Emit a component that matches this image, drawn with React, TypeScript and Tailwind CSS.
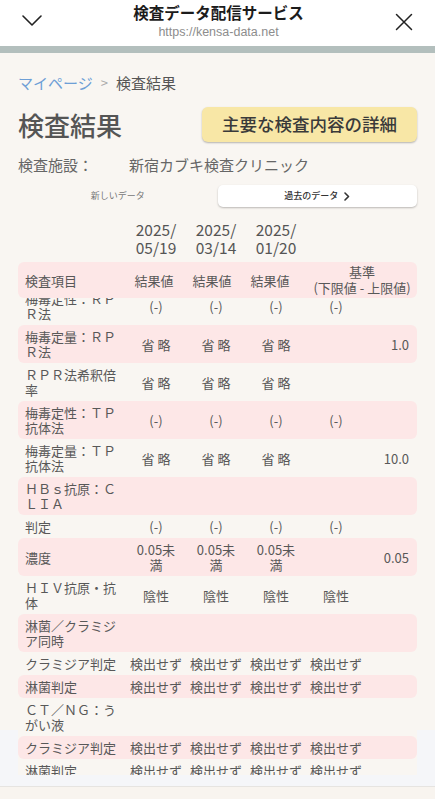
import React from "react";

type Row = { label: string; vals: string[]; ref?: string };

// Rows of the result table, top to bottom (the first is scrolled under the header).
const ROWS: Row[] = [
  { label: "梅毒定性：ＲＰＲ法", vals: ["(-)", "(-)", "(-)", "(-)"] },
  { label: "梅毒定量：ＲＰＲ法", vals: ["省 略", "省 略", "省 略", ""], ref: "1.0" },
  { label: "ＲＰＲ法希釈倍率", vals: ["省 略", "省 略", "省 略", ""] },
  { label: "梅毒定性：ＴＰ抗体法", vals: ["(-)", "(-)", "(-)", "(-)"] },
  { label: "梅毒定量：ＴＰ抗体法", vals: ["省 略", "省 略", "省 略", ""], ref: "10.0" },
  { label: "ＨＢｓ抗原：ＣＬＩＡ", vals: ["", "", "", ""] },
  { label: "判定", vals: ["(-)", "(-)", "(-)", "(-)"] },
  { label: "濃度", vals: ["0.05未\n満", "0.05未\n満", "0.05未\n満", ""], ref: "0.05" },
  { label: "ＨＩＶ抗原・抗体", vals: ["陰性", "陰性", "陰性", "陰性"] },
  { label: "淋菌／クラミジア同時", vals: ["", "", "", ""] },
  { label: "クラミジア判定", vals: ["検出せず", "検出せず", "検出せず", "検出せず"] },
  { label: "淋菌判定", vals: ["検出せず", "検出せず", "検出せず", "検出せず"] },
  { label: "ＣＴ／ＮＧ：うがい液", vals: ["", "", "", ""] },
  { label: "クラミジア判定", vals: ["検出せず", "検出せず", "検出せず", "検出せず"] },
  { label: "淋菌判定", vals: ["検出せず", "検出せず", "検出せず", "検出せず"] },
];

const DATES = ["2025/\n05/19", "2025/\n03/14", "2025/\n01/20"];

const JP = "font-['Noto_Sans_CJK_JP','Noto_Sans',sans-serif]";

export default function App() {
  return (
    <div className={`flex h-[799px] w-[435px] flex-col overflow-hidden ${JP}`}>
      <header className="flex h-[46px] shrink-0 items-start bg-white px-[22px]">
        <svg width="20" height="11" viewBox="0 0 20 11" className="mt-[15px]" fill="none">
          <path d="M1 1l9 9 9-9" stroke="#222" strokeWidth="1.6" strokeLinecap="round" strokeLinejoin="round" />
        </svg>
        <div className="flex flex-1 flex-col items-center pt-[2px]">
          <div className="text-[15.5px] font-bold leading-[20px] text-[#1c1c1c]">検査データ配信サービス</div>
          <div className="mt-[3px] font-['Liberation_Sans',sans-serif] text-[12.5px] leading-[14px] text-[#8d8d8d]">
            https://kensa-data.net
          </div>
        </div>
        <svg width="18" height="18" viewBox="0 0 18 18" className="mt-[13px]" fill="none">
          <path d="M1.5 1.5l15 15M16.5 1.5l-15 15" stroke="#222" strokeWidth="1.5" strokeLinecap="round" />
        </svg>
      </header>
      <div className="h-[7px] shrink-0 bg-[#b3bfbd]" />

      <main className="flex flex-1 flex-col bg-[linear-gradient(#f9f6f2_677px,#f5f6f9_677px)] px-[18px] pt-[20px]">
        <nav className="flex items-center text-[15px] leading-[20px]">
          <span className="text-[#6e9fd6]">マイページ</span>
          <span className="mx-[8px] text-[13px] text-[#aaaaaa]">&gt;</span>
          <span className="text-[#555555]">検査結果</span>
        </nav>

        <div className="mt-[14px] flex h-[35px] items-center justify-between">
          <h1 className="text-[26px] font-medium leading-none text-[#555555]">検査結果</h1>
          <button className="flex h-[35px] w-[215px] items-center justify-center rounded-[6px] bg-[#f8e7a6] text-[17.5px] font-medium text-[#3a3a3a] shadow-[0_1px_2px_rgba(0,0,0,0.28)]">
            主要な検査内容の詳細
          </button>
        </div>

        <div className="mt-[13px] flex text-[15px] leading-[20px] text-[#666666]">
          <span className="w-[111px]">検査施設：</span>
          <span>新宿カブキ検査クリニック</span>
        </div>

        <div className="mt-[10px] grid h-[22px] grid-cols-2">
          <div className="flex items-center justify-center text-[9px] text-[#777777]">新しいデータ</div>
          <div className="flex items-center justify-center gap-[6px] rounded-[5px] bg-white text-[9px] font-medium text-[#333333] shadow-[0_1px_2px_rgba(0,0,0,0.25)]">
            過去のデータ
            <svg width="6" height="9" viewBox="0 0 6 9" fill="none">
              <path d="M1 1l3.5 3.5L1 8" stroke="#333" strokeWidth="1.6" strokeLinecap="round" strokeLinejoin="round" />
            </svg>
          </div>
        </div>

        <div className="mt-[13px] grid h-[36px] grid-cols-[108px_60px_60px_60px_60px_1fr] text-[15.5px] leading-[18px] text-[#555555]">
          <div />
          {DATES.map((d) => (
            <div key={d} className="whitespace-pre-line text-center">
              {d}
            </div>
          ))}
        </div>

        <section className="mt-[6px] flex h-[513px] flex-col bg-[#f9f6f2] text-[13px] text-[#585858]">
          <div className="grid h-[36px] shrink-0 grid-cols-[107px_58px_58px_58px_1fr] items-center rounded-[6px] bg-[#fde7e7] leading-[15px]">
            <div className="pl-[7px]">検査項目</div>
            <div className="text-center">結果値</div>
            <div className="text-center">結果値</div>
            <div className="text-center">結果値</div>
            <div className="flex flex-col items-center pl-[8px] leading-[16px]">
              <span>基準</span>
              <span>(下限値 - 上限値)</span>
            </div>
          </div>

          <div className="flex-1 overflow-hidden">
            {ROWS.map((r, i) => (
              <div
                key={i}
                className={`grid grid-cols-[108px_60px_60px_60px_60px_1fr] items-center rounded-[6px] py-[4px] leading-[15px] ${
                  i === 0 ? "mt-[-11px]" : ""
                } ${i % 2 === 1 ? "bg-[#fde7e7]" : ""}`}
              >
                <div className="pl-[7px] pr-[2px]">{r.label}</div>
                {r.vals.map((v, j) => (
                  <div key={j} className="whitespace-pre-line text-center">
                    {v}
                  </div>
                ))}
                <div className="pr-[8px] text-right">{r.ref ?? ""}</div>
              </div>
            ))}
          </div>
        </section>
      </main>

      <div className="h-px shrink-0 bg-[#e6e4e1]" />
      <div className="h-[12px] shrink-0 bg-[#f8f4ef]" />
    </div>
  );
}
